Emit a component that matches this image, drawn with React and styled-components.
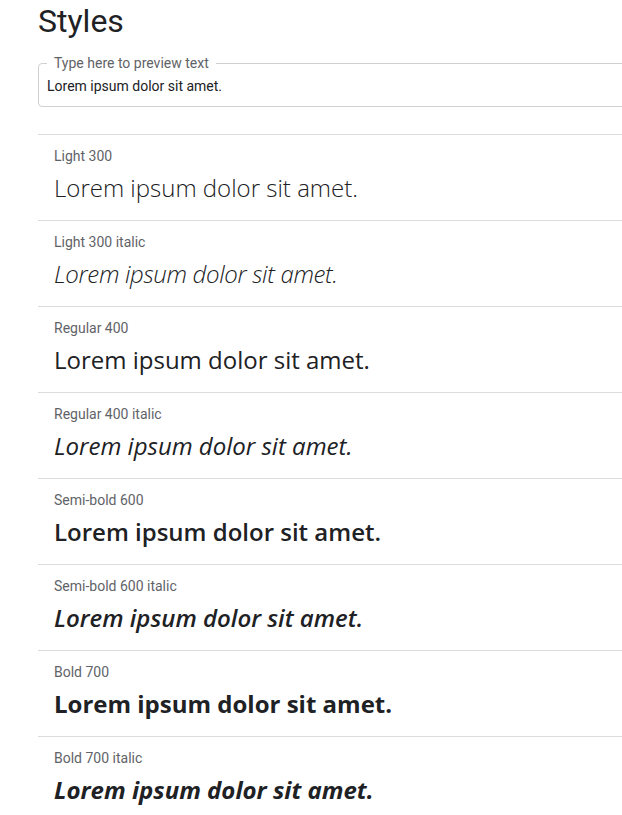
import React from "react";
import styled, { createGlobalStyle } from "styled-components";

const Global = createGlobalStyle`
  html, body { margin: 0; padding: 0; background: #fff; overflow: hidden; }
  body { font-family: Roboto, "Liberation Sans", sans-serif; }
`;

const Page = styled.div`
  margin-left: 38px;
  width: 640px;
`;

const Title = styled.h1`
  margin: 0;
  padding-top: 2px;
  font-family: Roboto, sans-serif;
  font-weight: 400;
  font-size: 32px;
  line-height: 38px;
  color: #202124;
`;

const Field = styled.fieldset`
  margin: 15px 0 0;
  padding: 0 8px 10px 8px;
  border: 1px solid #d0d0d0;
  border-radius: 4px;
  min-width: 0;
`;

const Legend = styled.legend`
  margin-left: 0;
  padding: 0 7px;
  font-size: 14px;
  line-height: 16px;
  color: #5f6368;
`;

const Input = styled.input`
  display: block;
  width: 100%;
  margin-top: 5px;
  border: none;
  outline: none;
  padding: 0;
  font-family: Roboto, sans-serif;
  font-size: 14px;
  line-height: 20px;
  height: 20px;
  color: #202124;
  background: transparent;
`;

const List = styled.div`
  margin-top: 27px;
`;

const Row = styled.div`
  border-top: 1px solid #dadce0;
  padding: 11px 16px 14px;
  display: flex;
  flex-direction: column;
  gap: 4px;
`;

const Label = styled.div`
  font-family: Roboto, sans-serif;
  font-size: 14px;
  line-height: 20px;
  color: #5f6368;
`;

const Sample = styled.div`
  font-family: "Open Sans", sans-serif;
  font-size: 24px;
  line-height: 36px;
  color: #202124;
  font-weight: ${(p) => p.$w};
  font-style: ${(p) => (p.$i ? "italic" : "normal")};
  letter-spacing: ${(p) => (p.$i && p.$w === 300 ? "-0.33px" : "normal")};
  white-space: nowrap;
`;

const styles = [
  ["Light 300", 300, false],
  ["Light 300 italic", 300, true],
  ["Regular 400", 400, false],
  ["Regular 400 italic", 400, true],
  ["Semi-bold 600", 600, false],
  ["Semi-bold 600 italic", 600, true],
  ["Bold 700", 700, false],
  ["Bold 700 italic", 700, true],
];

export default function App() {
  const [text, setText] = React.useState("Lorem ipsum dolor sit amet.");
  return (
    <Page>
      <Global />
      <Title>Styles</Title>
      <Field>
        <Legend>Type here to preview text</Legend>
        <Input value={text} onChange={(e) => setText(e.target.value)} />
      </Field>
      <List>
        {styles.map(([name, w, i]) => (
          <Row key={name}>
            <Label>{name}</Label>
            <Sample $w={w} $i={i}>{text}</Sample>
          </Row>
        ))}
      </List>
    </Page>
  );
}
